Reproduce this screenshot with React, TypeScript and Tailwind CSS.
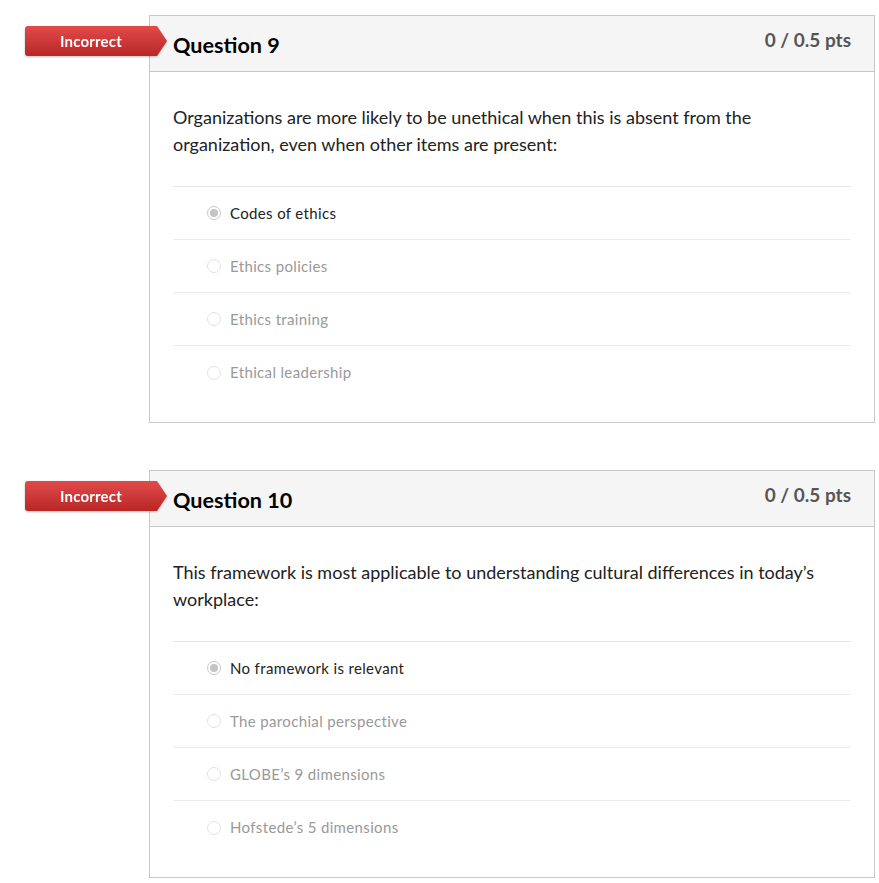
const questions = [
  {
    title: "Question 9",
    text: "Organizations are more likely to be unethical when this is absent from the organization, even when other items are present:",
    answers: ["Codes of ethics", "Ethics policies", "Ethics training", "Ethical leadership"],
    picked: 0,
  },
  {
    title: "Question 10",
    text: "This framework is most applicable to understanding cultural differences in today\u2019s workplace:",
    answers: ["No framework is relevant", "The parochial perspective", "GLOBE\u2019s 9 dimensions", "Hofstede\u2019s 5 dimensions"],
    picked: 0,
  },
];

function Badge() {
  return (
    <div className="absolute left-[-125px] top-[10px] flex h-[30px] items-stretch drop-shadow-[0_1px_1px_rgba(0,0,0,0.25)]">
      <div className="flex w-[132px] items-center justify-center rounded-l-[3px] bg-gradient-to-b from-[#e24a4a] to-[#b82626] text-[15px] font-bold tracking-[0.2px] text-white">
        Incorrect
      </div>
      <svg width="10" height="30" viewBox="0 0 10 30" className="block">
        <defs>
          <linearGradient id="bg" x1="0" y1="0" x2="0" y2="1">
            <stop offset="0" stopColor="#e24a4a" />
            <stop offset="1" stopColor="#b82626" />
          </linearGradient>
        </defs>
        <polygon points="0,0 10,15 0,30" fill="url(#bg)" />
      </svg>
    </div>
  );
}

function Radio({ on }: { on: boolean }) {
  return (
    <span className={`flex h-[14px] w-[14px] items-center justify-center rounded-full border ${on ? "border-[#c8c8c8]" : "border-[#e2e2e2]"} bg-white`}>
      {on && <span className="h-[8px] w-[8px] rounded-full bg-[#c4c4c4]" />}
    </span>
  );
}

export default function App() {
  return (
    <div className="min-h-screen bg-white pl-[149px] pr-[4px] pt-[15px] font-['Lato',sans-serif] text-[#2d3b45]">
      <div className="flex flex-col gap-[47px]">
        {questions.map((q) => (
          <div key={q.title} className="relative border border-[#c8c8c8]">
            <Badge />
            <div className="flex h-[56px] items-start justify-between border-b border-[#c8c8c8] bg-[#f5f5f5] pl-[23px] pr-[23px]">
              <h2 className="pt-[14px] text-[21.6px] font-bold leading-[30px] text-black">{q.title}</h2>
              <span className="pt-[12px] text-[19px] font-bold leading-[24px] text-[#555]">0 / 0.5 pts</span>
            </div>
            <div className="px-[23px] pb-[23px] pt-[32px]">
              <p className="pb-[28px] text-[18px] leading-[27px] text-[#222]">{q.text}</p>
              <div className="border-t border-[#e6e6e6]">
                {q.answers.map((a, i) => (
                  <div key={a} className={`flex h-[53px] items-center gap-[9px] pl-[34px] ${i < q.answers.length - 1 ? "border-b border-[#ececec]" : ""}`}>
                    <Radio on={i === q.picked} />
                    <span className={`text-[15px] tracking-[0.35px] ${i === q.picked ? "text-[#222]" : "text-[#999]"}`}>{a}</span>
                  </div>
                ))}
              </div>
            </div>
          </div>
        ))}
      </div>
    </div>
  );
}
